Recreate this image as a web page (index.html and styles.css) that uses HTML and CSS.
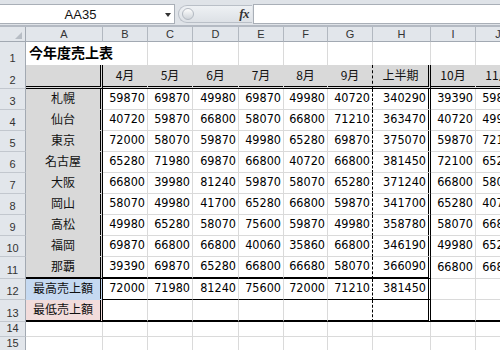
FILE: index.html
```html
<!DOCTYPE html>
<html lang="ja">
<head>
<meta charset="utf-8">
<title>今年度売上表</title>
<link rel="stylesheet" href="styles.css">
</head>
<body>
<div class="app">
  <div class="fbar">
    <div class="namebox"><span class="nbtext">AA35</span><i class="arrow"></i></div>
    <div class="pill"><i class="knob"></i><span class="fx">fx</span></div>
    <div class="input"></div>
  </div>
  <div class="sheet">
    <div class="r hd">
      <div class="corner"><i class="tri"></i></div>
      <div class="ch">A</div><div class="ch">B</div><div class="ch">C</div><div class="ch">D</div><div class="ch">E</div>
      <div class="ch">F</div><div class="ch">G</div><div class="ch">H</div><div class="ch">I</div><div class="ch">J</div>
    </div>
    <div class="r r1">
      <div class="rh">1</div><div class="c ttl">今年度売上表</div>
      <div class="c"></div><div class="c"></div><div class="c"></div><div class="c"></div><div class="c"></div><div class="c"></div><div class="c"></div><div class="c"></div><div class="c"></div>
    </div>
    <div class="r r2">
      <div class="rh">2</div><div class="c j a"></div>
      <div class="c j">4月</div><div class="c j">5月</div><div class="c j">6月</div><div class="c j">7月</div><div class="c j">8月</div><div class="c j g">9月</div>
      <div class="c j h">上半期</div><div class="c j">10月</div><div class="c j">11月</div>
    </div>
    <div class="r">
      <div class="rh">3</div><div class="c j fill a">札幌</div>
      <div class="c">59870</div><div class="c">69870</div><div class="c">49980</div><div class="c">69870</div><div class="c">49980</div><div class="c g">40720</div>
      <div class="c h">340290</div><div class="c">39390</div><div class="c">59870</div>
    </div>
    <div class="r">
      <div class="rh">4</div><div class="c j fill a">仙台</div>
      <div class="c">40720</div><div class="c">59870</div><div class="c">66800</div><div class="c">58070</div><div class="c">66800</div><div class="c g">71210</div>
      <div class="c h">363470</div><div class="c">40720</div><div class="c">49980</div>
    </div>
    <div class="r">
      <div class="rh">5</div><div class="c j fill a">東京</div>
      <div class="c">72000</div><div class="c">58070</div><div class="c">59870</div><div class="c">49980</div><div class="c">65280</div><div class="c g">69870</div>
      <div class="c h">375070</div><div class="c">59870</div><div class="c">72100</div>
    </div>
    <div class="r">
      <div class="rh">6</div><div class="c j fill a">名古屋</div>
      <div class="c">65280</div><div class="c">71980</div><div class="c">69870</div><div class="c">66800</div><div class="c">40720</div><div class="c g">66800</div>
      <div class="c h">381450</div><div class="c">72100</div><div class="c">65280</div>
    </div>
    <div class="r">
      <div class="rh">7</div><div class="c j fill a">大阪</div>
      <div class="c">66800</div><div class="c">39980</div><div class="c">81240</div><div class="c">59870</div><div class="c">58070</div><div class="c g">65280</div>
      <div class="c h">371240</div><div class="c">66800</div><div class="c">58070</div>
    </div>
    <div class="r">
      <div class="rh">8</div><div class="c j fill a">岡山</div>
      <div class="c">58070</div><div class="c">49980</div><div class="c">41700</div><div class="c">65280</div><div class="c">66800</div><div class="c g">59870</div>
      <div class="c h">341700</div><div class="c">65280</div><div class="c">40720</div>
    </div>
    <div class="r">
      <div class="rh">9</div><div class="c j fill a">高松</div>
      <div class="c">49980</div><div class="c">65280</div><div class="c">58070</div><div class="c">75600</div><div class="c">59870</div><div class="c g">49980</div>
      <div class="c h">358780</div><div class="c">58070</div><div class="c">66800</div>
    </div>
    <div class="r">
      <div class="rh">10</div><div class="c j fill a">福岡</div>
      <div class="c">69870</div><div class="c">66800</div><div class="c">66800</div><div class="c">40060</div><div class="c">35860</div><div class="c g">66800</div>
      <div class="c h">346190</div><div class="c">49980</div><div class="c">65280</div>
    </div>
    <div class="r r11">
      <div class="rh">11</div><div class="c j fill a">那覇</div>
      <div class="c">39390</div><div class="c">69870</div><div class="c">65280</div><div class="c">66800</div><div class="c">66680</div><div class="c g">58070</div>
      <div class="c h">366090</div><div class="c">66800</div><div class="c">66800</div>
    </div>
    <div class="r r12">
      <div class="rh">12</div><div class="c j blue a">最高売上額</div>
      <div class="c">72000</div><div class="c">71980</div><div class="c">81240</div><div class="c">75600</div><div class="c">72000</div><div class="c g">71210</div>
      <div class="c h">381450</div><div class="c"></div><div class="c"></div>
    </div>
    <div class="r r13">
      <div class="rh">13</div><div class="c j pink a">最低売上額</div>
      <div class="c"></div><div class="c"></div><div class="c"></div><div class="c"></div><div class="c"></div><div class="c g"></div>
      <div class="c h"></div><div class="c"></div><div class="c"></div>
    </div>
    <div class="r r14">
      <div class="rh">14</div>
      <div class="c"></div><div class="c"></div><div class="c"></div><div class="c"></div><div class="c"></div><div class="c"></div><div class="c"></div><div class="c"></div><div class="c"></div><div class="c"></div>
    </div>
    <div class="r r14">
      <div class="rh">15</div>
      <div class="c"></div><div class="c"></div><div class="c"></div><div class="c"></div><div class="c"></div><div class="c"></div><div class="c"></div><div class="c"></div><div class="c"></div><div class="c"></div>
    </div>
  </div>
</div>
</body>
</html>
```
FILE: styles.css
```css
* { box-sizing: border-box; }
html, body { margin: 0; padding: 0; background: #fff; }
body { width: 500px; height: 350px; overflow: hidden; }
.app { width: 500px; height: 350px; overflow: hidden; }

/* formula bar */
.fbar {
  height: 27px;
  display: flex;
  align-items: flex-start;
  padding-top: 4px;
  background: #dfe3e8;
  border-bottom: 2px solid #b4bac3;
}
.namebox {
  width: 175px;
  height: 20px;
  background: #fff;
  border: 1px solid #a9afb7;
  border-left: none;
  display: flex;
  align-items: center;
  font: 13px "Liberation Sans", Arial, sans-serif;
  color: #111;
}
.nbtext { flex: 1; text-align: center; padding-left: 2px; }
.arrow {
  width: 0; height: 0;
  border-left: 3.5px solid transparent;
  border-right: 3.5px solid transparent;
  border-top: 4px solid #333;
  margin: 1px 3px 0 6px;
}
.pill {
  width: 74px;
  height: 18px;
  margin: 1px 1px 0 3px;
  border: 1px solid #b9bfc7;
  border-right: none;
  border-radius: 9px 0 0 9px;
  background: linear-gradient(#eef1f4, #dde1e6);
  display: flex;
  align-items: center;
  padding-left: 3px;
}
.knob {
  width: 12px; height: 12px;
  border-radius: 50%;
  border: 1px solid #b3b9c1;
  background: linear-gradient(#fdfdfd, #cfd4da);
}
.fx {
  margin-left: auto;
  margin-right: 3px;
  font: italic bold 13px "Liberation Serif", "Times New Roman", serif;
  color: #333;
  letter-spacing: -0.5px;
}
.input {
  flex: 1;
  height: 20px;
  background: #fff;
  border: 1px solid #a9afb7;
  border-right: none;
}

/* sheet */
.sheet { width: 500px; overflow: hidden; }
.r {
  display: grid;
  grid-template-columns: 26px 77px 45px 45px 46px 45px 44px 45px 58px 45px 45px;
  height: 21px;
  width: 521px;
}
.hd { height: 15px; }
.r1 { height: 23px; }
.r2 { height: 24px; }
.r11, .r13 { height: 22px; }
.r14 { height: 15px; }

.corner, .ch, .rh {
  background: #e2e6eb;
  color: #333;
  font: 11px/1 "Liberation Sans", Arial, sans-serif;
}
.corner {
  border-right: 1px solid #a2a9b2;
  border-bottom: 1px solid #a2a9b2;
  position: relative;
}
.tri {
  position: absolute;
  right: 3px; bottom: 2px;
  width: 0; height: 0;
  border-left: 7px solid transparent;
  border-bottom: 7px solid #b7bdc5;
}
.ch {
  border-right: 1px solid #b2b8c0;
  border-bottom: 1px solid #a2a9b2;
  display: flex;
  align-items: center;
  justify-content: center;
  padding-top: 1px;
}
.rh {
  border-right: 1px solid #a2a9b2;
  border-bottom: 1px solid #c2c7ce;
  display: flex;
  align-items: flex-end;
  justify-content: center;
  padding-bottom: 2px;
}

.c {
  border-right: 1px solid #dadada;
  border-bottom: 1px solid #dadada;
  display: flex;
  align-items: center;
  justify-content: flex-end;
  padding: 0 2px 3px 0;
  white-space: nowrap;
  font: 12.5px "DejaVu Sans Condensed", "Noto Sans", sans-serif;
  color: #000;
}
.c.j {
  justify-content: center;
  padding-right: 0;
  font: 12px "Noto Sans CJK JP", sans-serif;
  color: #111;
}
.c.ttl {
  justify-content: flex-start;
  padding-left: 3px;
  font: bold 14px "Noto Sans CJK JP", sans-serif;
  color: #000;
  border-right-color: transparent;
  overflow: visible;
}
.c.fill { background: #d9d9d9; border-bottom-color: transparent; }
.c.blue { background: #c5d9f1; border-bottom-color: transparent; }
.c.pink { background: #f2dcdb; }

/* row borders */
.r1 .c { border-bottom: 2px solid #000; }
.r2 .c {
  background: #d9d9d9;
  border-right-color: transparent;
  border-bottom: 3px double #000;
}
.r11 > .c:nth-child(-n+9) { border-bottom: 2px solid #000; }
.r12 > .c:nth-child(n+3):nth-child(-n+9) { border-bottom: 1px solid #000; }
.r13 > .c { border-bottom: 2px solid #000; }

/* column borders */
.c.a { border-right: 3px double #000; }
.c.g { border-right: 1px dashed #000; }
.c.h { border-right: 3px double #000; }
```
